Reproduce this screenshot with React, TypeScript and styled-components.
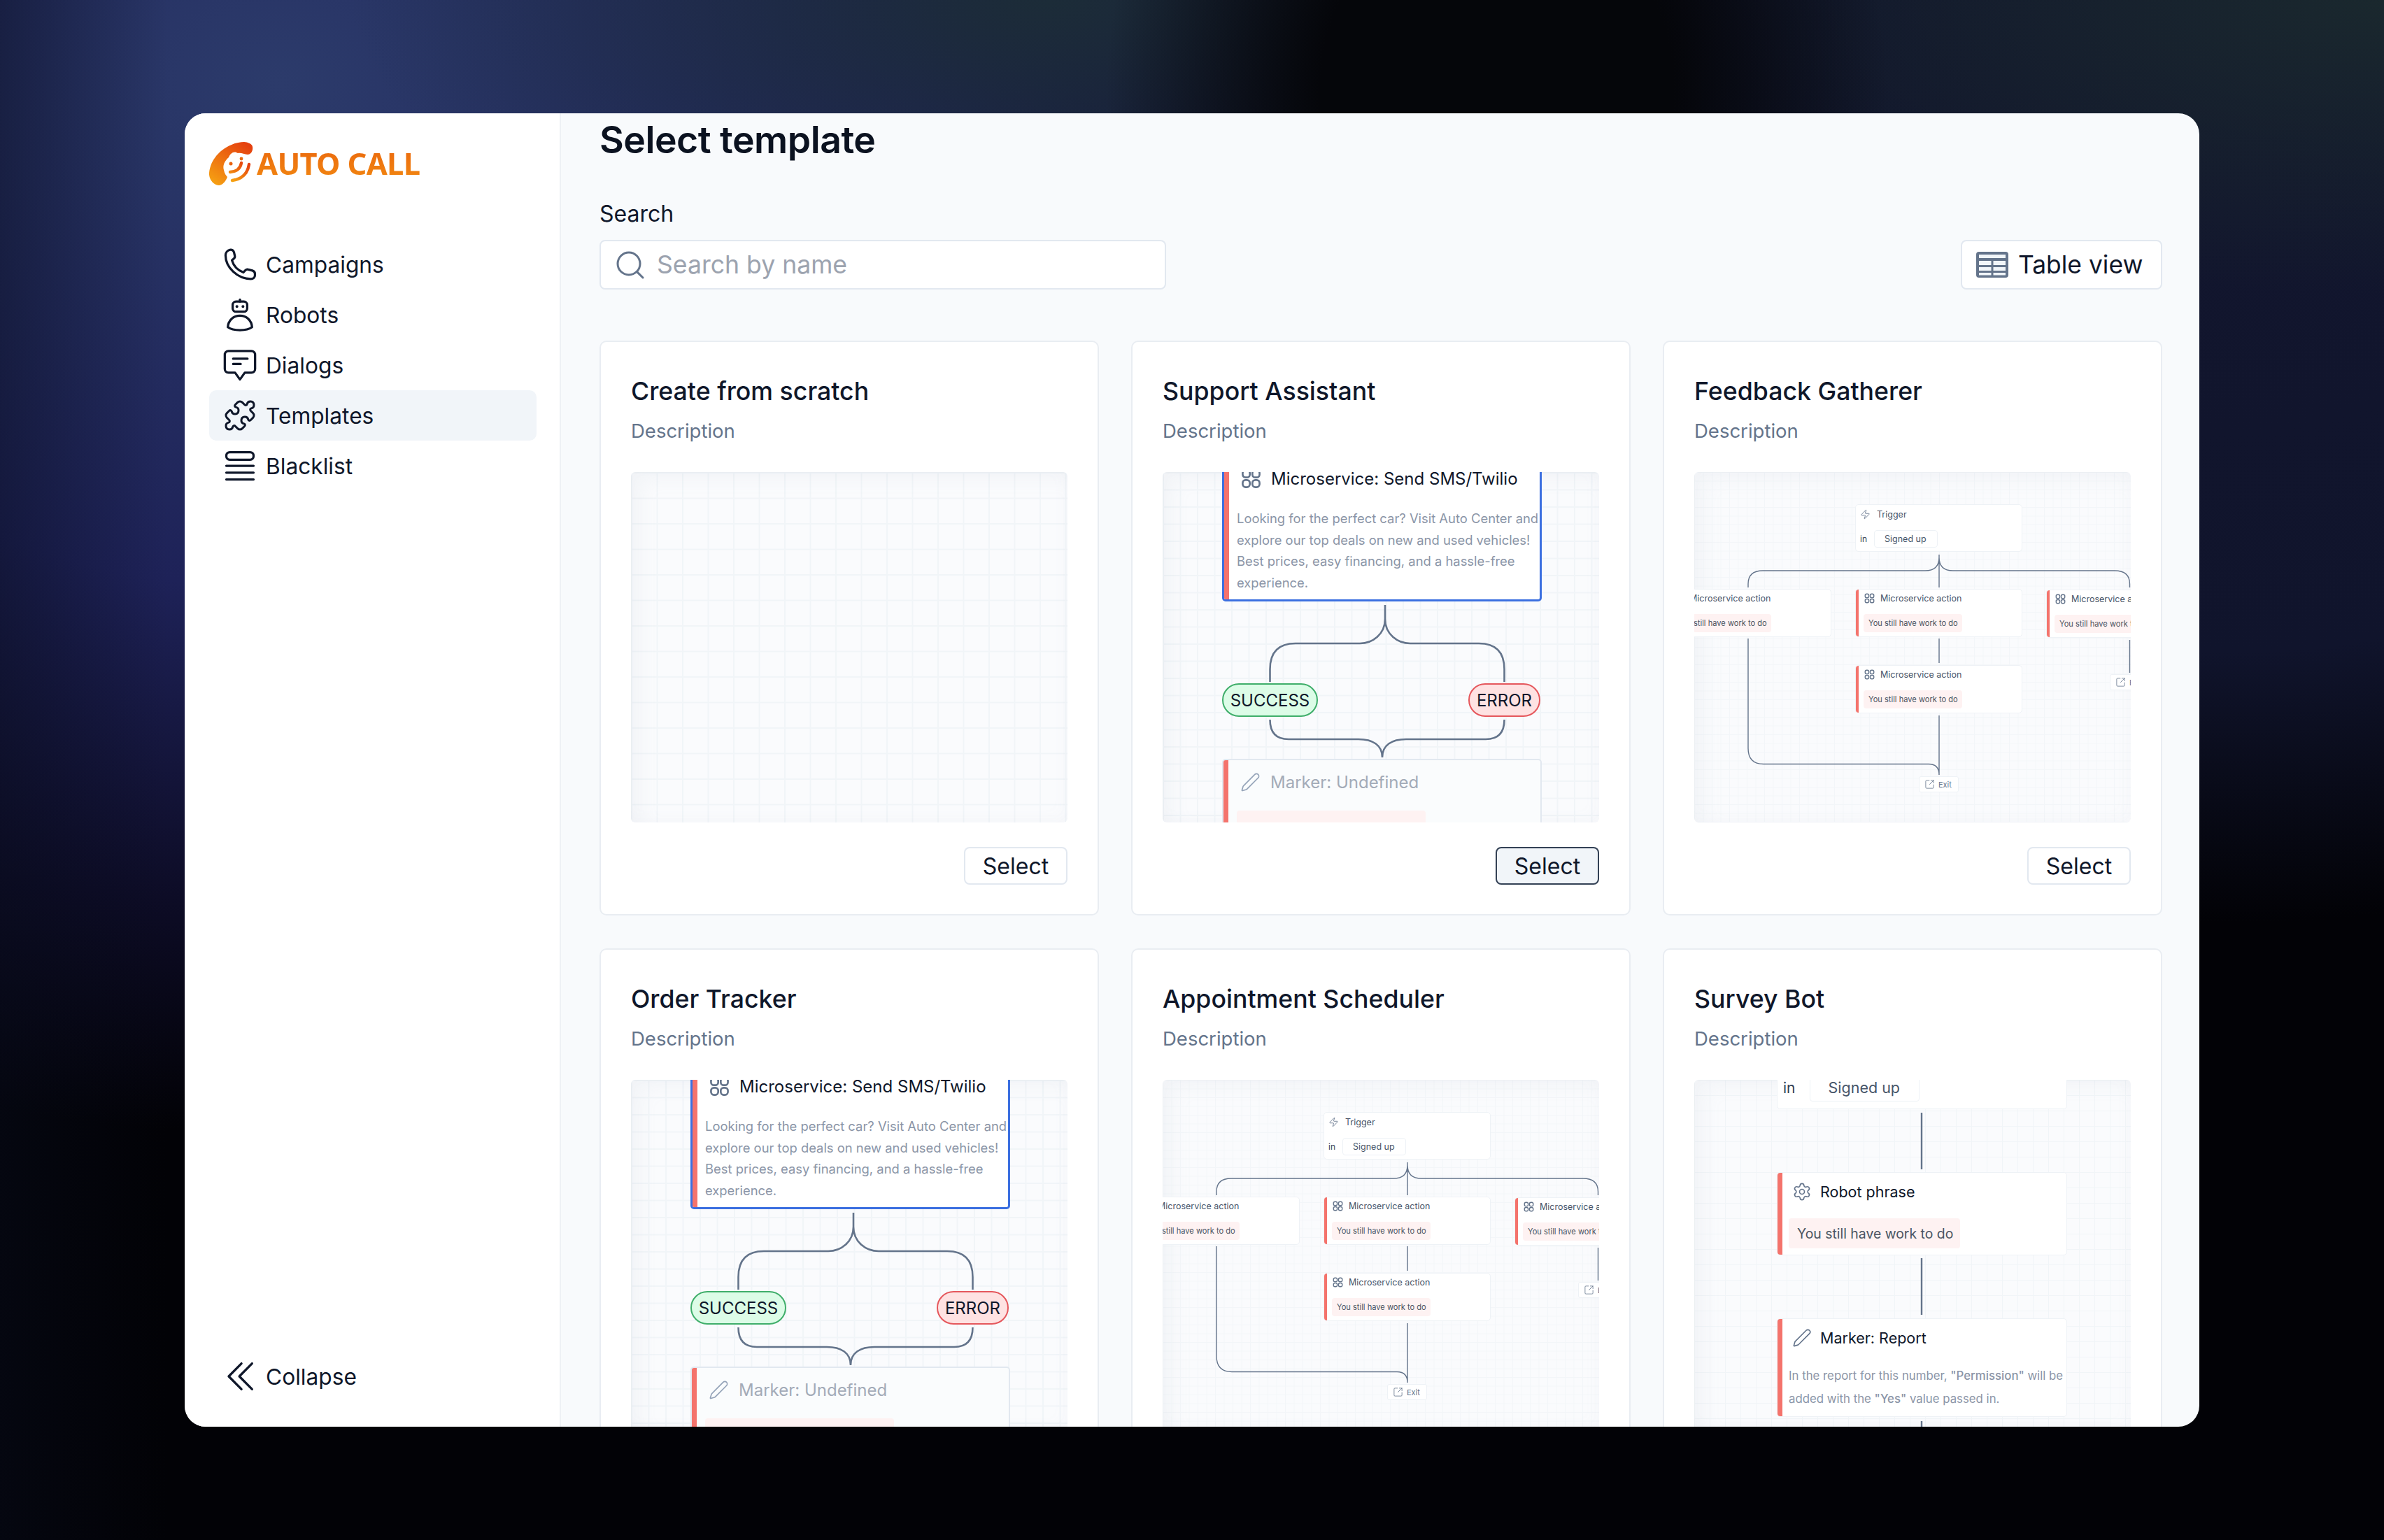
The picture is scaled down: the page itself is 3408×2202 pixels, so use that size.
import React from 'react';
import styled, { createGlobalStyle } from 'styled-components';
import { Pen, Puzzle, Search, Settings, SquareArrowOutUpRight, Zap } from 'lucide-react';

type FlowKind = 'empty' | 'sms' | 'graph' | 'bot';

const templates: { title: string; flow: FlowKind; active?: boolean }[] = [
  { title: 'Create from scratch', flow: 'empty' },
  { title: 'Support Assistant', flow: 'sms', active: true },
  { title: 'Feedback Gatherer', flow: 'graph' },
  { title: 'Order Tracker', flow: 'sms' },
  { title: 'Appointment Scheduler', flow: 'graph' },
  { title: 'Survey Bot', flow: 'bot' },
];

const LogoIcon = () => (
  <svg width="64" height="64" viewBox="0 0 64 64">
    <defs>
      <linearGradient id="logoFill" x1="0.8" y1="0" x2="0.1" y2="1">
        <stop offset="0" stopColor="#e5400f" />
        <stop offset="1" stopColor="#f6a313" />
      </linearGradient>
    </defs>
    <path
      fill="url(#logoFill)"
      d="M50 0C55 0 62 3 62 7C63 12 60 18 55 18C50 18 46 15 41 16C36 12 30 16 28 22C22 27 19 34 21 40C22 45 24 48 26 50C24 56 19 62 14 62C8 62 1 56 0 47C0 30 12 12 32 4C38 1 45 0 50 0Z"
    />
    <circle cx="31" cy="31" r="2.500" fill="#e9620f" />
    <circle cx="46" cy="24" r="2.400" fill="#ea6a0f" />
    <path
      fill="none"
      stroke="url(#logoFill)"
      strokeWidth="4.400"
      strokeLinecap="round"
      d="M30 43Q44 42 46 30M33 55Q54 52 57 32"
    />
  </svg>
);

const PhoneIcon = () => (
  <IconSvg viewBox="0 0 24 24">
    <path d="M5.600 2.400c1.200-.3 2.200.5 2.500 1.700l.5 2.200c.2.800 0 1.400-.6 1.900L6.700 9.300c1.100 3.700 4 6.700 7.600 8l1.200-1.300c.6-.6 1.300-.8 2-.6l2.700.7c1 .3 1.700 1 1.700 2.100v.9c0 1.500-1.100 2.500-2.700 2.500C10.400 21.600 2.500 14 2.500 6c0-1.700 1.200-3.200 3.100-3.600z" />
  </IconSvg>
);

const RobotIcon = () => (
  <IconSvg viewBox="0 0 24 24">
    <rect x="7.200" y="3.300" width="9.600" height="6.700" rx="2.200" />
    <path d="M12 2v1.300" />
    <path d="M10 6.600h.01M14 6.600h.01" strokeWidth="1.900" />
    <path d="M12 12.600c-4.400 0-7.700 3.200-8 7.600 2 1.500 5 2 8 2s6-.5 8-2c-.3-4.400-3.600-7.600-8-7.600z" />
  </IconSvg>
);

const ChatIcon = () => (
  <IconSvg viewBox="0 0 24 24">
    <path d="M4.500 2.700h15c1.500 0 2.500 1 2.500 2.500v9.300c0 1.500-1 2.500-2.500 2.500h-4.300L12 21.500l-3.200-4.500H4.500C3 17 2 16 2 14.500V5.200c0-1.500 1-2.500 2.500-2.500z" />
    <path d="M7.500 7.800h9.500M7.500 11.300h5" />
  </IconSvg>
);

const ListIcon = () => (
  <IconSvg viewBox="0 0 24 24">
    <rect x="3" y="3" width="18" height="5" rx="2.300" />
    <path d="M3 12h18M3 16.500h18M3 21h18" />
  </IconSvg>
);

const CollapseIcon = () => (
  <IconSvg viewBox="0 0 24 24">
    <path d="M13 3.500 4.600 12 13 20.500M20 3.500 11.600 12 20 20.500" />
  </IconSvg>
);

const TableIcon = () => (
  <svg width="46" height="37" viewBox="0 0 46 37">
    <rect width="46" height="37" rx="4" fill="#64748b" />
    <rect x="4" y="4" width="38" height="5" fill="#f1f5f9" />
    <rect x="4" y="13" width="17.500" height="6" fill="#f1f5f9" />
    <rect x="24.500" y="13" width="17.500" height="6" fill="#f1f5f9" />
    <rect x="4" y="22" width="17.500" height="5" fill="#f1f5f9" />
    <rect x="24.500" y="22" width="17.500" height="5" fill="#f1f5f9" />
    <rect x="4" y="30" width="17.500" height="3.500" fill="#f1f5f9" />
    <rect x="24.500" y="30" width="17.500" height="3.500" fill="#f1f5f9" />
  </svg>
);

const ServiceIcon = ({ size }: { size: number }) => (
  <svg width={size} height={size} viewBox="0 0 24 24" fill="none" stroke="#64748b" strokeWidth="2.200">
    <rect x="2" y="2" width="8.500" height="8.500" rx="3.500" />
    <rect x="13.500" y="2" width="8.500" height="8.500" rx="3.500" />
    <rect x="2" y="13.500" width="8.500" height="8.500" rx="3.500" />
    <rect x="13.500" y="13.500" width="8.500" height="8.500" rx="3.500" />
  </svg>
);

const SmsFlow = () => (
  <>
    <Wires $width={2.600} d="M318 190V210C318 232 300 245 282 245H190Q153.500 245 153.500 282V300M318 210C318 232 336 245 354 245H452Q488.500 245 488.500 282V300M153.500 354Q153.500 382 180 382H280C300 382 314 390 314 408M488.500 354Q488.500 382 462 382H348C328 382 314 390 314 408" />
    <FlowNode $x={85} $y={-24} $w={457} $h={209} $accent $inset={20} $selected $pad={10}>
      <NodeHeader $gap={14} $indent={4} $size={24}>
        <ServiceIcon size={29} />
        Microservice: Send SMS/Twilio
      </NodeHeader>
      <NodeBody $size={18.400} $line={30.500} $top={22} $indent={-2} $right={-6}>
        Looking for the perfect car? Visit Auto Center and explore our top deals on new and used vehicles! Best prices, easy financing, and a hassle-free experience.
      </NodeBody>
    </FlowNode>
    <Pill $x={85} $w={137} $tone="success">SUCCESS</Pill>
    <Pill $x={437} $w={103} $tone="error">ERROR</Pill>
    <FlowNode $x={85} $y={410} $w={457} $h={130} $accent $inset={20} $faded $pad={11}>
      <NodeHeader $gap={14} $indent={4} $size={24} $muted>
        <Pen size={29} color="#94a3b8" strokeWidth={1.400} />
        Marker: Undefined
      </NodeHeader>
      <PhraseChip $left={-1} $top={21} $w={270} $h={40} $size={20} />
    </FlowNode>
  </>
);

const ActionNode = ({ x, y, accent = true }: { x: number; y: number; accent?: boolean }) => (
  <FlowNode $x={x} $y={y} $w={239} $h={69} $accent={accent} $inset={8} $thin $pad={2}>
    <NodeHeader $gap={8} $indent={4} $size={12.500} $small>
      <ServiceIcon size={15} />
      Microservice action
    </NodeHeader>
    <PhraseChip $left={3} $top={13} $w={141} $h={26} $size={11.100}>You still have work to do</PhraseChip>
  </FlowNode>
);

const GraphFlow = () => (
  <>
    <Wires $width={1.400} d="M350 118V165M77 165V160Q77 141 98 141H330Q350 141 350 122M622.500 165V160Q622.500 141 601 141H370Q350 141 350 122M350 238V273M350 348V433M77 238V395Q77 417.500 99 417.500H335Q350 417.500 350 433M622.500 240V287" />
    <FlowNode $x={230} $y={46} $w={239} $h={68} $inset={0} $thin $pad={3}>
      <NodeHeader $gap={9} $indent={6} $size={12.500} $small>
        <Zap size={15} color="#64748b" strokeWidth={1.400} />
        Trigger
      </NodeHeader>
      <TriggerRow $gap={10} $indent={6} $size={12} $top={13}>
        in
        <SignedChip $w={91} $h={25} $indent={14} $size={12.500}>Signed up</SignedChip>
      </TriggerRow>
    </FlowNode>
    <ActionNode x={-43} y={167} accent={false} />
    <ActionNode x={230} y={167} />
    <ActionNode x={503} y={168} />
    <ActionNode x={230} y={276} />
    <ExitChip $x={321} $y={435} $w={57}>
      <SquareArrowOutUpRight size={15} color="#64748b" strokeWidth={1.300} />
      Exit
    </ExitChip>
    <ExitChip $x={594} $y={289} $w={60}>
      <SquareArrowOutUpRight size={15} color="#64748b" strokeWidth={1.300} />
      Exit
    </ExitChip>
  </>
);

const BotFlow = () => (
  <>
    <Wires $width={2.400} d="M325 47V128M325 255V336M325 488V520" />
    <FlowNode $x={118} $y={-50} $w={415} $h={92} $inset={0} $thin $pad={40}>
      <TriggerRow $gap={20} $indent={8} $size={21} $top={0}>
        in
        <SignedChip $w={157} $h={40} $indent={26} $size={21.500}>Signed up</SignedChip>
      </TriggerRow>
    </FlowNode>
    <FlowNode $x={118} $y={132} $w={415} $h={119} $accent $inset={8} $thin $pad={7}>
      <NodeHeader $gap={12} $indent={13} $size={21.500}>
        <Settings size={28} color="#64748b" strokeWidth={1.400} />
        Robot phrase
      </NodeHeader>
      <PhraseChip $left={8} $top={18} $w={245} $h={43} $size={19.400}>You still have work to do</PhraseChip>
    </FlowNode>
    <FlowNode $x={118} $y={341} $w={415} $h={141} $accent $inset={8} $thin $pad={7}>
      <NodeHeader $gap={12} $indent={13} $size={21.500}>
        <Pen size={28} color="#64748b" strokeWidth={1.400} />
        Marker: Report
      </NodeHeader>
      <NodeBody $size={16.800} $line={33} $top={18} $indent={8} $right={4}>
        In the report for this number, <strong>"Permission"</strong> will be added with the <strong>"Yes"</strong> value passed in.
      </NodeBody>
    </FlowNode>
  </>
);

const flows: Record<FlowKind, React.ReactNode> = {
  empty: null,
  sms: <SmsFlow />,
  graph: <GraphFlow />,
  bot: <BotFlow />,
};

const gridSizes: Record<FlowKind, number> = { empty: 36.500, sms: 24.500, graph: 12.500, bot: 22 };

const App: React.FC = () => {
  return (
    <Stage>
      <GlobalStyle />
      <AppWindow>
        <Sidebar>
          <Logo>
            <LogoIcon />
            <LogoText>AUTO CALL</LogoText>
          </Logo>
          <Nav>
            <NavItem><PhoneIcon />Campaigns</NavItem>
            <NavItem><RobotIcon />Robots</NavItem>
            <NavItem><ChatIcon />Dialogs</NavItem>
            <NavItem $active><NavPuzzle size={48} strokeWidth={1.500} color="#0f172a" />Templates</NavItem>
            <NavItem><ListIcon />Blacklist</NavItem>
          </Nav>
          <CollapseItem><CollapseIcon />Collapse</CollapseItem>
        </Sidebar>
        <Main>
          <Title>Select template</Title>
          <Toolbar>
            <SearchField>
              <FieldLabel>Search</FieldLabel>
              <SearchBox>
                <Search size={48} color="#64748b" strokeWidth={1.500} />
                <SearchInput placeholder="Search by name" />
              </SearchBox>
            </SearchField>
            <ViewButton>
              <TableIcon />
              Table view
            </ViewButton>
          </Toolbar>
          <CardGrid>
            {templates.map((template) => (
              <Card key={template.title}>
                <CardTitle>{template.title}</CardTitle>
                <CardDescription>Description</CardDescription>
                <Preview $grid={gridSizes[template.flow]} $faint={template.flow === 'graph'}>
                  {flows[template.flow]}
                </Preview>
                <CardFooter>
                  <SelectButton $active={template.active}>Select</SelectButton>
                </CardFooter>
              </Card>
            ))}
          </CardGrid>
        </Main>
      </AppWindow>
    </Stage>
  );
};

export default App;

const GlobalStyle = createGlobalStyle`
  html, body {
    margin: 0;
    padding: 0;
    background: #020206;
  }

  * {
    box-sizing: border-box;
  }
`;

const Stage = styled.div`
  width: 3408px;
  height: 2202px;
  overflow: hidden;
  padding: 162px 264px;
  font-family: Inter, "Noto Sans", sans-serif;
  color: #0f172a;
  background:
    linear-gradient(90deg, rgba(8, 12, 28, 0.45) 0, rgba(8, 12, 28, 0) 240px),
    radial-gradient(ellipse 560px 620px at 2140px 130px, #05060a 0%, #05060a 45%, rgba(5, 6, 10, 0) 100%),
    radial-gradient(ellipse 1100px 420px at 3408px 0px, #1a282e 0%, rgba(26, 40, 46, 0) 100%),
    radial-gradient(ellipse 1300px 1020px at 3200px 300px, #12162e 0%, #10142c 62%, rgba(16, 20, 44, 0) 100%),
    radial-gradient(ellipse 1000px 420px at 1500px 0px, #1c2c38 0%, rgba(28, 44, 56, 0) 100%),
    radial-gradient(ellipse 1900px 1500px at 400px 120px, #2c3b6b 0%, #1e2258 48%, #0d0c26 78%, rgba(5, 5, 14, 0) 100%),
    #020206;
`;

const AppWindow = styled.div`
  display: flex;
  width: 2880px;
  height: 1878px;
  border-radius: 30px;
  overflow: hidden;
  background: #f8fafc;
`;

const Sidebar = styled.aside`
  display: flex;
  flex-direction: column;
  flex: 0 0 538px;
  padding: 41px 33px 36px 35px;
  background: #ffffff;
  border-right: 2px solid #eef1f5;
`;

const Logo = styled.div`
  display: flex;
  align-items: center;
  gap: 4px;
  height: 64px;
  margin-bottom: 75px;
`;

const LogoText = styled.span`
  font-family: "Noto Sans", sans-serif;
  font-size: 43.500px;
  font-weight: 700;
  letter-spacing: -0.7px;
  margin-top: -4px;
  background: linear-gradient(180deg, #ea640c, #f28a12);
  background-clip: text;
  -webkit-background-clip: text;
  color: transparent;
`;

const Nav = styled.nav`
  display: flex;
  flex-direction: column;
`;

const NavItem = styled.div<{ $active?: boolean }>`
  display: flex;
  align-items: center;
  gap: 11px;
  height: 72px;
  padding-left: 18px;
  border-radius: 10px;
  font-size: 31.700px;
  color: #0f172a;
  background: ${(p) => (p.$active ? '#f1f5f9' : 'transparent')};
`;

const NavPuzzle = styled(Puzzle)`
  flex: none;
  margin: 0 2px;
`;

const CollapseItem = styled(NavItem)`
  margin-top: auto;
`;

const IconSvg = styled.svg`
  width: 52px;
  height: 52px;
  flex: none;
  fill: none;
  stroke: #0f172a;
  stroke-width: 1.500;
  stroke-linecap: round;
  stroke-linejoin: round;
`;

const Main = styled.main`
  flex: 1;
  min-width: 0;
  padding: 2px 53px 0 55px;
  overflow: hidden;
`;

const Title = styled.h1`
  margin: 0 0 50px;
  font-size: 53.500px;
  line-height: 72px;
  font-weight: 600;
  letter-spacing: -0.5px;
  color: #0b1220;
`;

const Toolbar = styled.div`
  display: flex;
  justify-content: space-between;
  align-items: flex-end;
  margin-bottom: 73px;
`;

const SearchField = styled.div`
  display: flex;
  flex-direction: column;
  gap: 17px;
  width: 810px;
`;

const FieldLabel = styled.label`
  font-size: 32px;
  line-height: 40px;
`;

const SearchBox = styled.div`
  display: flex;
  align-items: center;
  gap: 12px;
  height: 71px;
  padding-left: 18px;
  background: #ffffff;
  border: 2px solid #e2e8f0;
  border-radius: 8px;
`;

const SearchInput = styled.input`
  flex: 1;
  min-width: 0;
  border: 0;
  outline: 0;
  background: transparent;
  font-family: inherit;
  font-size: 35.600px;
  color: #0f172a;

  &::placeholder {
    color: #9ca3af;
    opacity: 1;
  }
`;

const ViewButton = styled.button`
  display: flex;
  align-items: center;
  gap: 14px;
  width: 288px;
  height: 71px;
  padding: 0 0 0 20px;
  background: #ffffff;
  border: 2px solid #e2e8f0;
  border-radius: 8px;
  font-family: inherit;
  font-size: 35.400px;
  color: #0f172a;
`;

const CardGrid = styled.div`
  display: grid;
  grid-template-columns: repeat(3, 1fr);
  gap: 47px 46px;
`;

const Card = styled.section`
  display: flex;
  flex-direction: column;
  padding: 48px 43px 42px;
  background: #ffffff;
  border: 2px solid #e9edf2;
  border-radius: 10px;
`;

const CardTitle = styled.h2`
  margin: 0 0 15px;
  font-size: 35.700px;
  line-height: 44px;
  font-weight: 500;
`;

const CardDescription = styled.p`
  margin: 0 0 39px;
  font-size: 27.500px;
  line-height: 40px;
  color: #64748b;
`;

const Preview = styled.div<{ $grid: number; $faint?: boolean }>`
  position: relative;
  height: 501px;
  overflow: hidden;
  border-radius: 6px;
  background-color: #fafbfd;
  background-image:
    linear-gradient(${(p) => (p.$faint ? '#f3f6f9 1px' : '#f1f5f8 1.5px')}, transparent ${(p) => (p.$faint ? '1px' : '1.5px')}),
    linear-gradient(90deg, ${(p) => (p.$faint ? '#f3f6f9 1px' : '#f1f5f8 1.5px')}, transparent ${(p) => (p.$faint ? '1px' : '1.5px')});
  background-size: ${(p) => p.$grid}px ${(p) => p.$grid}px;
  box-shadow: inset 14px 10px 26px rgba(148, 163, 184, 0.08), inset -6px -6px 20px rgba(148, 163, 184, 0.03);
`;

const CardFooter = styled.div`
  display: flex;
  justify-content: flex-end;
  margin-top: 35px;
`;

const SelectButton = styled.button<{ $active?: boolean }>`
  width: 148px;
  height: 54px;
  padding: 0;
  border: 2px solid ${(p) => (p.$active ? '#334155' : '#e2e8f0')};
  border-radius: 8px;
  background: ${(p) => (p.$active ? '#f1f5f9' : '#ffffff')};
  font-family: inherit;
  font-size: 32px;
  color: #0f172a;
`;

const WiresSvg = styled.svg`
  position: absolute;
  inset: 0;
  width: 100%;
  height: 100%;
  overflow: visible;
  fill: none;
  stroke: #64748b;
`;

const Wires = ({ d, $width }: { d: string; $width: number }) => (
  <WiresSvg>
    <path d={d} strokeWidth={$width} />
  </WiresSvg>
);

const FlowNode = styled.div<{
  $x: number;
  $y: number;
  $w: number;
  $h: number;
  $pad: number;
  $inset: number;
  $accent?: boolean;
  $selected?: boolean;
  $faded?: boolean;
  $thin?: boolean;
}>`
  position: absolute;
  left: ${(p) => p.$x}px;
  top: ${(p) => p.$y}px;
  width: ${(p) => p.$w}px;
  height: ${(p) => p.$h}px;
  padding: ${(p) => p.$pad}px 0 0 ${(p) => p.$inset}px;
  overflow: hidden;
  border-radius: 5px;
  border: ${(p) => (p.$selected ? '3px solid #3b6fe0' : p.$thin ? '1px solid #eef2f6' : '2px solid #e2e8f0')};
  background: ${(p) => (p.$faded ? '#fafcfd' : '#ffffff')};

  &::before {
    content: '';
    display: ${(p) => (p.$accent ? 'block' : 'none')};
    position: absolute;
    left: 0;
    top: 0;
    bottom: 0;
    width: ${(p) => (p.$w > 300 ? 7 : 4)}px;
    background: #f4736c;
  }
`;

const NodeHeader = styled.div<{ $gap: number; $indent: number; $size: number; $muted?: boolean; $small?: boolean }>`
  display: flex;
  align-items: center;
  gap: ${(p) => p.$gap}px;
  height: ${(p) => (p.$small ? 20 : 40)}px;
  padding-left: ${(p) => p.$indent}px;
  white-space: nowrap;
  font-size: ${(p) => p.$size}px;
  color: ${(p) => (p.$muted ? '#a3abb8' : p.$small ? '#475569' : '#0f172a')};
`;

const NodeBody = styled.p<{ $size: number; $line: number; $top: number; $indent: number; $right: number }>`
  margin: ${(p) => p.$top}px ${(p) => p.$right}px 0 ${(p) => p.$indent}px;
  font-size: ${(p) => p.$size}px;
  line-height: ${(p) => p.$line}px;
  color: #8b95a7;

  strong {
    font-weight: 500;
  }
`;

const PhraseChip = styled.div<{ $left: number; $top: number; $w: number; $h: number; $size: number }>`
  display: flex;
  align-items: center;
  width: ${(p) => p.$w}px;
  height: ${(p) => p.$h}px;
  margin: ${(p) => p.$top}px 0 0 ${(p) => p.$left}px;
  padding-left: ${(p) => Math.round(p.$h * 0.27)}px;
  border-radius: 4px;
  white-space: nowrap;
  background: #fef2f2;
  font-size: ${(p) => p.$size}px;
  color: #4b5563;
`;

const TriggerRow = styled.div<{ $gap: number; $indent: number; $size: number; $top: number }>`
  display: flex;
  align-items: center;
  gap: ${(p) => p.$gap}px;
  margin-top: ${(p) => p.$top}px;
  padding-left: ${(p) => p.$indent}px;
  font-size: ${(p) => p.$size}px;
  color: #334155;
`;

const SignedChip = styled.div<{ $w: number; $h: number; $indent: number; $size: number }>`
  display: flex;
  align-items: center;
  width: ${(p) => p.$w}px;
  height: ${(p) => p.$h}px;
  padding-left: ${(p) => p.$indent}px;
  border: 1px solid #eef2f6;
  border-radius: 4px;
  font-size: ${(p) => p.$size}px;
  color: #475569;
`;

const Pill = styled.div<{ $x: number; $w: number; $tone: 'success' | 'error' }>`
  position: absolute;
  left: ${(p) => p.$x}px;
  top: 302px;
  display: flex;
  align-items: center;
  justify-content: center;
  width: ${(p) => p.$w}px;
  height: 48px;
  border-radius: 24px;
  border: 2px solid ${(p) => (p.$tone === 'success' ? '#3fae6a' : '#e5575c')};
  background: ${(p) => (p.$tone === 'success' ? '#dcfce7' : '#fee2e2')};
  font-size: 24px;
  color: #0f172a;
`;

const ExitChip = styled.div<{ $x: number; $y: number; $w: number }>`
  position: absolute;
  left: ${(p) => p.$x}px;
  top: ${(p) => p.$y}px;
  display: flex;
  align-items: center;
  gap: 5px;
  width: ${(p) => p.$w}px;
  height: 23px;
  padding-left: 7px;
  border: 1px solid #eef2f6;
  border-radius: 3px;
  background: #ffffff;
  font-size: 11px;
  color: #64748b;
`;
